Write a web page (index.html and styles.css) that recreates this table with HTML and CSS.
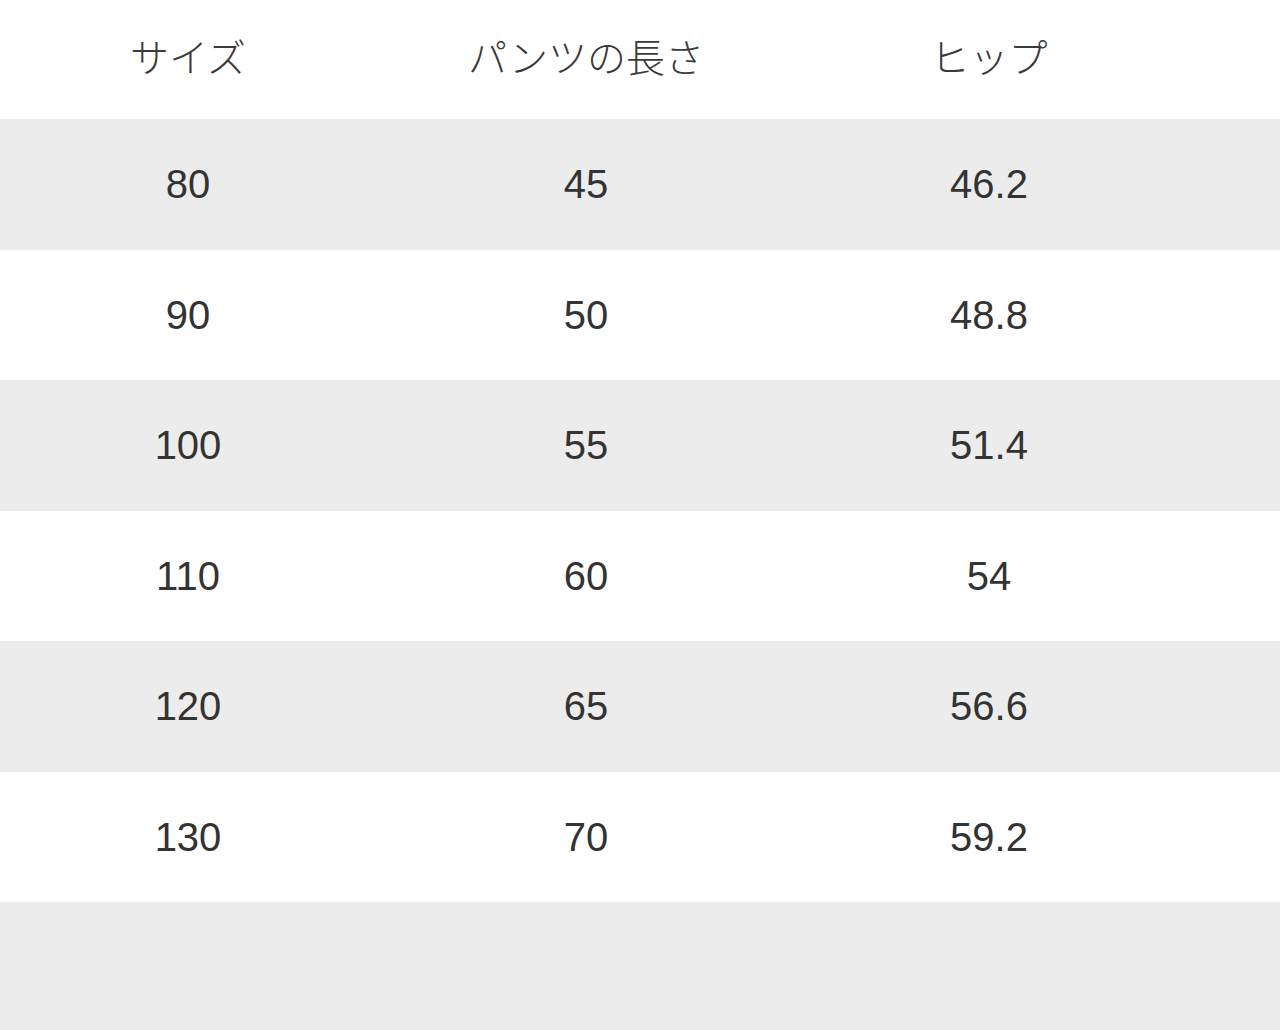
FILE: index.html
```html
<!DOCTYPE html>
<html lang="ja">
<head>
<meta charset="utf-8">
<link rel="stylesheet" href="styles.css">
</head>
<body>
<div class="table">
  <div class="row head">
    <div class="cell">サイズ</div>
    <div class="cell">パンツの長さ</div>
    <div class="cell">ヒップ</div>
    <div class="cell"></div>
  </div>
  <div class="row alt"><div class="cell">80</div><div class="cell">45</div><div class="cell">46.2</div><div class="cell"></div></div>
  <div class="row"><div class="cell">90</div><div class="cell">50</div><div class="cell">48.8</div><div class="cell"></div></div>
  <div class="row alt"><div class="cell">100</div><div class="cell">55</div><div class="cell">51.4</div><div class="cell"></div></div>
  <div class="row"><div class="cell">110</div><div class="cell">60</div><div class="cell">54</div><div class="cell"></div></div>
  <div class="row alt"><div class="cell">120</div><div class="cell">65</div><div class="cell">56.6</div><div class="cell"></div></div>
  <div class="row"><div class="cell">130</div><div class="cell">70</div><div class="cell">59.2</div><div class="cell"></div></div>
  <div class="row alt filler"></div>
</div>
</body>
</html>
```

FILE: styles.css
```css
html, body {
  margin: 0;
  padding: 0;
  background: #ffffff;
}
body {
  width: 1280px;
  height: 1030px;
  overflow: hidden;
  font-family: "Liberation Sans", "Noto Sans CJK JP", sans-serif;
  color: #333333;
}
.table {
  display: flex;
  flex-direction: column;
}
.row {
  display: grid;
  grid-template-columns: 376px 420px 386px 1fr;
  align-items: center;
  height: 130.5px;
  font-size: 40px;
}
.row.head {
  height: 119px;
  padding-bottom: 8px;
  box-sizing: border-box;
}
.head .cell {
  font-family: "Noto Sans CJK JP", sans-serif;
  font-weight: 300;
  font-size: 39px;
  color: #3a3a3a;
}
.row.alt {
  background: #ececec;
}
.row.filler {
  height: 130px;
}
.cell {
  text-align: center;
  line-height: 1;
}
```
